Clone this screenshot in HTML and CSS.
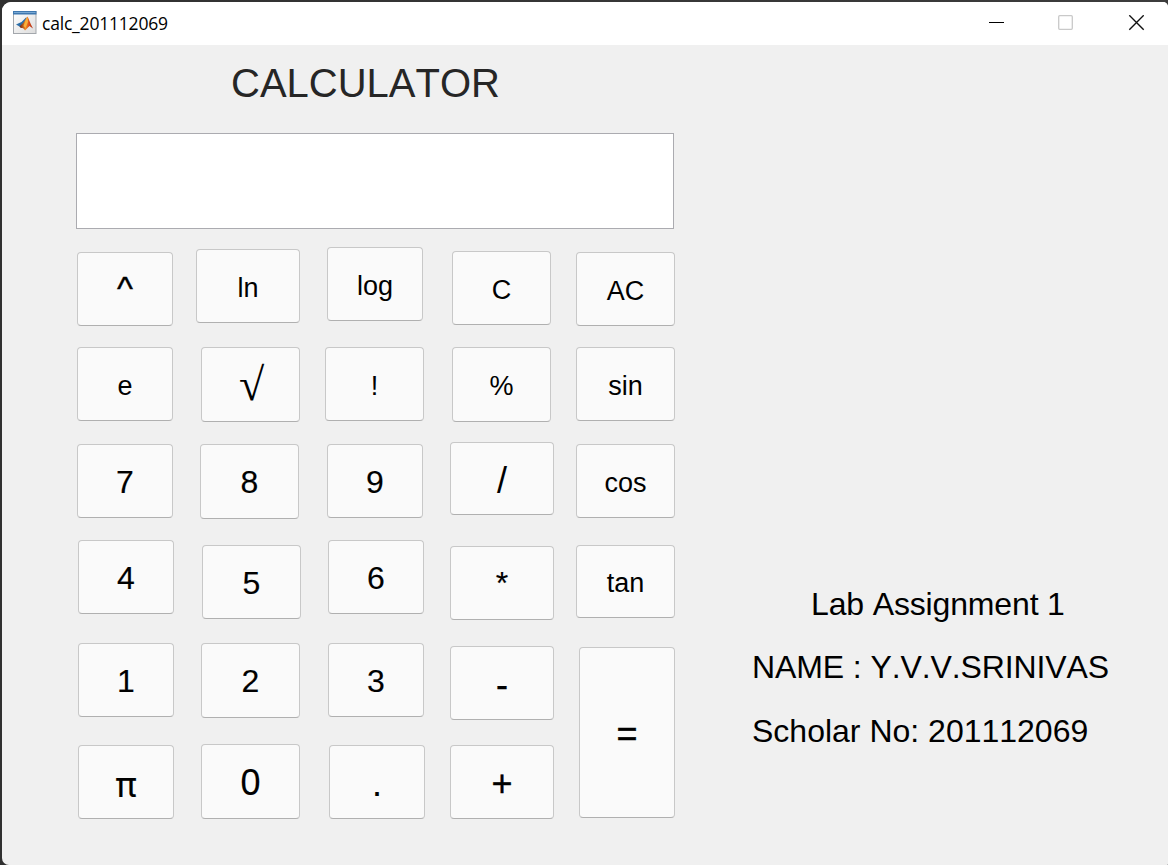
FILE: index.html
```html
<!DOCTYPE html>
<html lang="en">
<head>
<meta charset="utf-8">
<title>calc_201112069</title>
<link rel="stylesheet" href="styles.css">
</head>
<body>
<div class="window">
  <header class="titlebar">
    <svg class="app-icon" width="24" height="24" viewBox="0 0 24 24">
      <defs>
        <linearGradient id="face" x1="0" y1="0" x2="1" y2="1"><stop offset="0" stop-color="#fff"/><stop offset="1" stop-color="#dcdcdc"/></linearGradient>
        <linearGradient id="flame" x1="0" y1="0" x2="1" y2="0"><stop offset="0" stop-color="#6b1c12"/><stop offset=".45" stop-color="#f08a24"/><stop offset=".65" stop-color="#e25a1c"/><stop offset="1" stop-color="#a8220f"/></linearGradient>
      </defs>
      <rect x=".5" y=".5" width="22.500" height="22" fill="url(#face)" stroke="#a3a7ac"/>
      <rect x="0" y="0" width="23.500" height="3.500" fill="#3f78b0"/>
      <rect x="1" y="1" width="21.500" height="1" fill="#79a9d4"/>
      <path d="M3 13.500L8.500 11L13.500 6L12 13L8.500 17L6.500 15.500Z" fill="#2b6ea8"/>
      <path d="M6.500 15.500L10.500 11.500L14.500 5.500C16 8 17 12.500 20 17.500L16.500 15L12 19.500C11 17.500 10 17 8 17Z" fill="url(#flame)"/>
      <path d="M13 8.500L14.500 6L15 11L12.500 17L10.500 15Z" fill="#f9b13c"/>
    </svg>
    <span class="app-name">calc_201112069</span>
    <svg class="controls" width="156" height="16" viewBox="0 0 156 16">
      <path d="M0 7.500H15" stroke="#000" fill="none"/>
      <rect x="69.700" y=".7" width="13.600" height="13.600" rx="1" stroke="#c9c9c9" stroke-width="1.300" fill="none"/>
      <path d="M140.300.3L154.700 14.700M154.700.3L140.300 14.700" stroke="#111" stroke-width="1.400" fill="none"/>
    </svg>
  </header>
  <main class="content">
    <section class="calculator">
      <h1 class="heading">CALCULATOR</h1>
      <div class="display"></div>
      <div class="keypad">
        <div class="col c1">
          <button class="key op caret">^</button>
          <button class="key fn e">e</button>
          <button class="key seven">7</button>
          <button class="key four">4</button>
          <button class="key one">1</button>
          <button class="key op pi">π</button>
        </div>
        <div class="col c2">
          <button class="key fn ln">ln</button>
          <button class="key op root">√</button>
          <button class="key eight">8</button>
          <button class="key five">5</button>
          <button class="key two">2</button>
          <button class="key op zero">0</button>
        </div>
        <div class="col c3">
          <button class="key fn log">log</button>
          <button class="key fn factorial">!</button>
          <button class="key nine">9</button>
          <button class="key six">6</button>
          <button class="key three">3</button>
          <button class="key op dot">.</button>
        </div>
        <div class="col c4">
          <button class="key fn clear">C</button>
          <button class="key fn percent">%</button>
          <button class="key op divide">/</button>
          <button class="key op times">*</button>
          <button class="key op minus">-</button>
          <button class="key op plus">+</button>
        </div>
        <div class="col c5">
          <button class="key fn all-clear">AC</button>
          <button class="key fn sin">sin</button>
          <button class="key fn cos">cos</button>
          <button class="key fn tan">tan</button>
          <button class="key op equals">=</button>
        </div>
      </div>
    </section>
    <aside class="info">
      <p class="lab">Lab Assignment 1</p>
      <p class="name">NAME : Y.V.V.SRINIVAS</p>
      <p class="scholar">Scholar No: 201112069</p>
    </aside>
  </main>
</div>
</body>
</html>
```

FILE: styles.css
```css
* { box-sizing: border-box; }
body {
  margin: 0;
  height: 865px;
  padding: 2px 0 0 2px;
  overflow: hidden;
  background: linear-gradient(90deg, #303030, #3c3c3c);
  font-family: "Liberation Sans", Arial, sans-serif;
  font-kerning: none;
  color: #000;
}
.window {
  height: 863px;
  background: #f0f0f0;
  border-radius: 9px 5px 1px 7px;
  overflow: hidden;
}
.titlebar {
  height: 43px;
  background: #fff;
  display: flex;
  align-items: flex-start;
  padding: 9px 23px 0 11px;
}
.app-icon { flex: none; }
.app-name {
  margin-left: 5px;
  font: 17.5px/24px "Open Sans", "Noto Sans", sans-serif;
  letter-spacing: -.2px;
}
.controls { margin: 4px 0 0 auto; }
.content { display: flex; height: 820px; }
.calculator { width: 690px; padding-left: 74px; }
.heading {
  margin: 15px 0 0 155px;
  height: 73px;
  font-size: 40px;
  line-height: 46px;
  font-weight: 400;
  color: #262626;
}
.display {
  width: 598px;
  height: 96px;
  background: #fff;
  border: 1px solid #ababb0;
}
.keypad { display: flex; margin: 18px 0 0 1px; }
.col { display: flex; flex-direction: column; align-items: flex-start; flex: none; }
.c1 { width: 119px; }
.c2 { width: 129px; }
.c3 { width: 125px; }
.c4 { width: 126px; }
.c5 { width: 99px; }
.key {
  flex: none;
  width: 99px;
  height: 74px;
  margin: 0;
  padding: 2px 0 0;
  border: 1px solid #c8c8c8;
  border-bottom-color: #b0b0b0;
  border-radius: 4px;
  background: #fafafa;
  color: #000;
  font: 32px/1.15 "Liberation Sans", Arial, sans-serif;
  font-kerning: none;
  text-align: center;
  -webkit-text-stroke: .15px #000;
}
.fn { font-size: 27px; padding-top: 5px; -webkit-text-stroke-width: 0; }
.op { font-size: 36px; padding-top: 3px; }

.c1 .key, .log, .nine, .six, .three, .dot, .equals { width: 96px; }
.ln, .divide, .times, .minus, .plus { width: 104px; }
.root, .eight, .two, .zero, .percent { height: 75px; }
.divide, .tan { height: 73px; }

.c1 .caret { margin-top: 5px; padding-top: 0; font-size: 34px; -webkit-text-stroke-width: .4px; }
.e { margin-top: 21px; }
.seven { margin-top: 23px; }
.four { margin: 22px 0 0 1px; }
.one { margin: 29px 0 0 1px; }
.pi { margin: 28px 0 0 1px; padding-top: 5px; font-family: Inter, sans-serif; font-size: 35px; }

.ln { margin-top: 2px; }
.root {
  margin: 24px 0 0 5px;
  padding: 1px 0 0 2px;
  font-family: "Liberation Serif", serif;
  font-size: 46px;
  line-height: 1;
  -webkit-text-stroke-width: 0;
}
.eight { margin: 22px 0 0 4px; }
.five { margin: 26px 0 0 6px; }
.two { margin: 24px 0 0 5px; }
.zero { margin: 26px 0 0 5px; }

.log { margin-left: 2px; }
.factorial { margin-top: 26px; }
.nine { margin: 23px 0 0 2px; }
.six { margin: 22px 0 0 3px; }
.three { margin: 29px 0 0 3px; }
.dot { margin: 28px 0 0 4px; }

.clear { margin: 4px 0 0 2px; }
.percent { margin: 22px 0 0 2px; }
.divide { margin-top: 20px; padding-top: 5px; -webkit-text-stroke-width: 0; }
.times { margin-top: 31px; padding-top: 0; font-size: 32px; }
.minus, .plus, .equals { -webkit-text-stroke-width: .4px; }
.minus { margin-top: 26px; }
.plus { margin-top: 25px; }

.all-clear { margin-top: 5px; }
.sin { margin-top: 21px; }
.cos { margin-top: 23px; }
.tan { margin-top: 27px; }
.equals { margin: 29px 0 0 3px; height: 171px; }

.info { padding: 541px 0 0 60px; font-size: 32px; line-height: 36px; white-space: nowrap; }
.info p { margin: 0; }
.info .lab { margin-left: 59px; letter-spacing: -.15px; }
.info .name { margin-top: 27px; letter-spacing: -.1px; }
.info .scholar { margin-top: 28px; }
```
